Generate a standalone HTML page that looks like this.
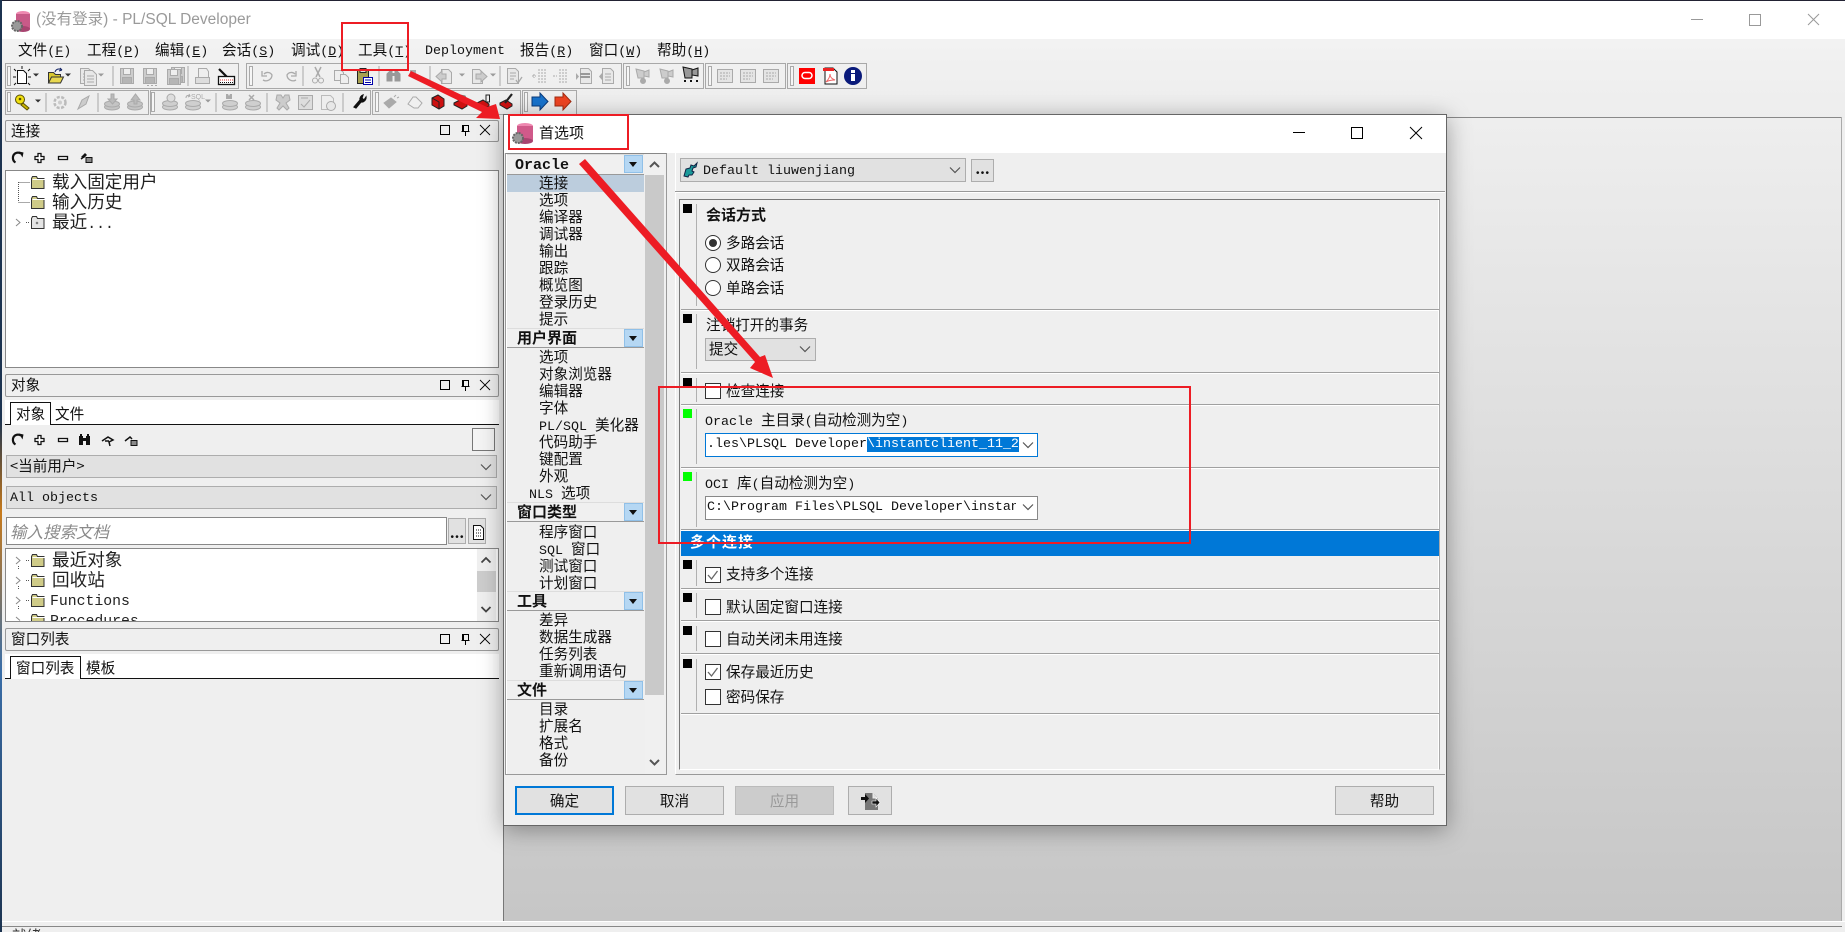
<!DOCTYPE html>
<html lang="zh"><head><meta charset="utf-8"><title>PL/SQL Developer</title>
<style>
html,body{margin:0;padding:0;width:1845px;height:932px;overflow:hidden;background:#efefef}
body{position:relative;font-family:"WenQuanYi Zen Hei","Noto Sans CJK SC",sans-serif;font-size:14.6px;color:#111}
div,svg{position:absolute}
.t{white-space:nowrap;line-height:18px;height:18px}
i.m,.m{font-family:"Liberation Mono",monospace;font-size:13.33px;font-style:normal}
u{text-decoration:underline}
.hd{background:#efefef;border:1px solid #999;box-sizing:border-box;border-radius:2px}
.cb{background:#e1e1e1;border:1px solid #adadad;box-sizing:border-box}
.btn{background:#e1e1e1;border:1px solid #adadad;box-sizing:border-box;text-align:center;line-height:27px}
.w{background:#fff;box-sizing:border-box}
.big{font-size:17.6px;color:#222}
.b{font-weight:bold}
.gl{left:681px;width:758px;height:1px;background:#a0a0a0;box-shadow:0 1px 0 #fff}
.vl{left:696px;width:1px;background:#b0b0b0}
.sq{left:683px;width:9px;height:9px;background:#000}
.ck{left:705px;width:16px;height:16px;background:#fff;border:1px solid #333;box-sizing:border-box}
.nh{left:507px;width:137px;height:20px;background:#f0f0f0;border-bottom:1px solid #999;border-top:1px solid #ddd;box-sizing:border-box}
.nb{left:624px;width:19px;height:18px;background:#b5d7f3;border:1px solid #90c0e8;box-sizing:border-box}
.nb:after{content:"";position:absolute;left:4px;top:6px;border:4px solid transparent;border-top:5px solid #111;border-bottom:0}
</style></head><body>
<!-- title bar -->
<div style="left:0;top:0;width:1845px;height:39px;background:#fff"></div>
<div style="left:0;top:0;width:1845px;height:1px;background:#223"></div>
<div class="t" style="left:36px;top:10px;font-size:15.5px;color:#9a9a9a;font-family:'Liberation Sans','WenQuanYi Zen Hei',sans-serif;line-height:20px;height:20px">(没有登录) - PL/SQL Developer</div>
<svg style="left:1680px;top:8px" width="150" height="24" fill="none" stroke="#999"><path d="M11 11.5h12"/><rect x="69.5" y="6.5" width="11" height="11"/><path d="M128 6l11 11M139 6l-11 11"/></svg>
<!-- menu + toolbar bg -->
<div style="left:0;top:39px;width:1845px;height:79px;background:linear-gradient(#f2f2f2,#ededed)"></div>
<div style="left:504px;top:117px;width:1337px;height:804px;background:linear-gradient(#eeeeee,#c6c6c6);border-top:1px solid #888;box-sizing:border-box"></div>
<div style="left:503px;top:117px;width:1px;height:805px;background:#777"></div>
<div style="left:1841px;top:117px;width:1px;height:805px;background:#aaa"></div>
<div style="left:0;top:921px;width:1845px;height:1px;background:#fff"></div>
<div style="left:0;top:922px;width:1845px;height:10px;background:#efefef"></div>
<div style="left:0;top:926px;width:1842px;height:1px;background:#888"></div>
<div class="t" style="left:12px;top:927px;color:#333">就绪</div>
<div style="left:0;top:0;width:2px;height:932px;background:linear-gradient(#1c3350,#1c3350 45%,#c77a1c 55%,#3a6ea8 72%,#1c3350)"></div>
<!-- menu -->
<div class="t" style="left:18px;top:41px">文件<i class="m">(<u>F</u>)</i></div>
<div class="t" style="left:87px;top:41px">工程<i class="m">(<u>P</u>)</i></div>
<div class="t" style="left:155px;top:41px">编辑<i class="m">(<u>E</u>)</i></div>
<div class="t" style="left:222px;top:41px">会话<i class="m">(<u>S</u>)</i></div>
<div class="t" style="left:291px;top:41px">调试<i class="m">(<u>D</u>)</i></div>
<div class="t" style="left:358px;top:41px">工具<i class="m">(<u>T</u>)</i></div>
<div class="t m" style="left:425px;top:43px">Deployment</div>
<div class="t" style="left:520px;top:41px">报告<i class="m">(<u>R</u>)</i></div>
<div class="t" style="left:589px;top:41px">窗口<i class="m">(<u>W</u>)</i></div>
<div class="t" style="left:657px;top:41px">帮助<i class="m">(<u>H</u>)</i></div>

<!-- toolbars & window icons -->
<svg style="left:0;top:0" width="1845" height="932">
<defs>
<g id="gdoc" fill="#e8e8e8" stroke="#aaa"><path d="M3.5 1.5h8l4 4v11h-12z"/><path d="M6 7h7M6 10h7M6 13h7" fill="none"/></g>
<g id="gflop" fill="#ccc" stroke="#aaa"><rect x="2.5" y="1.5" width="13" height="15"/><rect x="5.5" y="1.5" width="7" height="6" fill="#eee"/><rect x="4.5" y="10.5" width="9" height="6" fill="#b5b5b5"/></g>
<g id="gtray" fill="#c4c4c4" stroke="#aaa"><ellipse cx="9" cy="14" rx="7.5" ry="3"/><ellipse cx="9" cy="11" rx="7.5" ry="3"/></g>
<g id="gdb" fill="#cfcfcf" stroke="#aaa"><ellipse cx="9" cy="14" rx="7.500" ry="3"/><ellipse cx="9" cy="10.500" rx="7.500" ry="3"/></g>
<g id="cam" fill="#ccc" stroke="#aaa"><path d="M2 3l8 2v7H4zM10 6l5-2v7l-5-1z"/><circle cx="9" cy="15" r="2.5" fill="#aaa"/></g>
<g id="glist" fill="#e4e4e4" stroke="#aaa"><rect x="1.5" y="2.5" width="15" height="13"/><path d="M4 6h10M4 9h10M4 12h7" fill="none" stroke-dasharray="2 1"/></g>
<path id="chev" d="M-5-2.5L0 2.5 5-2.5" fill="none" stroke="#555" stroke-width="1.2"/>
<path id="drop" d="M-3-1.5h6L0 1.5z" fill="#333"/>
<g id="grip"><rect x="0.5" y="0.5" width="3" height="19" fill="#f6f6f6" stroke="#aaa"/></g>
<g id="fold"><path d="M1.5 4.5l1-2h4l1 2h6.500v10H1.500z" fill="#cfcb88" stroke="#333"/><path d="M2.500 5.500h12" stroke="#fff"/></g>
<g id="phd" fill="none" stroke="#000"><rect x="0.5" y="0.5" width="9" height="9"/><path d="M22.500 .5h6v6h-6zM23.500 6.500v-6M25.500 7v4M21.500 6.500h8"/><path d="M40 0l10 10M50 0l-10 10" stroke-width=".9"/></g>
<g id="ptool"><path d="M15.500 4.500a5.500 5.500 0 0 1-.5-9 6 6 0 0 1 6 0" fill="none" stroke="#111" stroke-width="2.200"/><path d="M19-6.500l4.500 1-1 5z" fill="#111"/><path d="M38-4.500h3v3h3v3h-3v3h-3v-3h-3v-3h3z" fill="#fff" stroke="#111" stroke-width="1.300"/><rect x="58.500" y="-1.500" width="9" height="3" fill="#fff" stroke="#111" stroke-width="1.300"/></g>
</defs>
<g fill="none" stroke="#a8a8a8">
<rect x="5.5" y="63.5" width="233" height="25"/><rect x="246.5" y="63.5" width="375" height="25"/><rect x="623.5" y="63.5" width="80" height="25"/><rect x="705.5" y="63.5" width="80" height="25"/><rect x="787.5" y="63.5" width="79" height="25"/>
<rect x="5.5" y="90.5" width="143" height="24"/><rect x="150.5" y="90.5" width="220" height="24"/><rect x="372.5" y="90.5" width="148" height="24"/><rect x="522.5" y="90.5" width="54" height="24"/>
<path d="M113 66v20M188 66v20M303 66v20M379 66v20M430 66v20M500 66v20M46 93v19M98 93v19M216 93v19M267 93v19M343 93v19"/>
</g>
<use href="#grip" x="7" y="66"/><use href="#grip" x="249" y="66"/><use href="#grip" x="626" y="66"/><use href="#grip" x="708" y="66"/><use href="#grip" x="790" y="66"/>
<use href="#grip" x="7" y="92"/><use href="#grip" x="151" y="92"/><use href="#grip" x="375" y="92"/><use href="#grip" x="524" y="92"/>
<!-- row1 -->
<path d="M17.500 70.500h6l3 3v10h-9z" fill="#fff" stroke="#111"/><path d="M14 69l2 2M22 66v3M30 69l-2 2M13 77h3M28 77h3M14 85l2-2M30 85l-2-2" stroke="#111"/>
<use href="#drop" x="36" y="75"/>
<path d="M48.500 72.500h5l2 2h5v8h-12z" fill="#d8c830" stroke="#333"/><path d="M48.500 83l3-6h12l-3 6z" fill="#e8d850" stroke="#333"/><path d="M55 72c1-3 4-4 7-2l-2-2M62 70l-3 1" fill="none" stroke="#126"/><use href="#drop" x="68" y="75"/>
<use href="#gdoc" x="77" y="67"/><use href="#gdoc" x="81" y="69"/><use href="#drop" x="101" y="75" opacity=".45"/>
<use href="#gflop" x="118" y="67"/><use href="#gflop" x="141" y="67"/><path d="M147 85.500h2M151 85.500h2M155 85.500h2" stroke="#aaa"/><use href="#gflop" x="169" y="66"/><use href="#gflop" x="165" y="68"/>
<path d="M198.500 68.500h8l2 3v6h-10z" fill="#eee" stroke="#aaa"/><rect x="195.500" y="77.500" width="14" height="6" fill="#ddd" stroke="#aaa"/>
<path d="M219 69l8 8" stroke="#111" stroke-width="2.200"/><rect x="218.500" y="76.500" width="16" height="8" fill="#fff" stroke="#111" stroke-width="1.300"/><path d="M220 80h13" stroke="#d33" stroke-dasharray="1 1"/><path d="M220 82.500h13" stroke="#111" stroke-dasharray="1 1"/>
<path d="M263 80a6 6 0 0 0 9-5 5 5 0 0 0-8-1M262 71v5h5M296 80a6 6 0 0 1-9-5 5 5 0 0 1 8-1M296 71v5h-5" fill="none" stroke="#aaa" stroke-width="1.300"/>
<path d="M315 67l5 10M321 67l-5 10" stroke="#aaa" stroke-width="1.500"/><circle cx="315" cy="80.500" r="2.500" fill="none" stroke="#aaa"/><circle cx="321" cy="80.500" r="2.500" fill="none" stroke="#aaa"/>
<path d="M334.500 70.500h7l2 2v8h-9z" fill="#eee" stroke="#aaa"/><path d="M340.500 74.500h5l3 3v6h-8z" fill="#eee" stroke="#aaa"/>
<rect x="357.500" y="70.500" width="11" height="13" fill="#a8a050" stroke="#222"/><rect x="360" y="68.500" width="6" height="4" fill="#ddd" stroke="#222"/><rect x="363.500" y="77.500" width="9" height="7" fill="#fff" stroke="#00a"/><path d="M365 80h6M365 82.500h6" stroke="#00a"/>
<path d="M387 81v-7l3-3h2v10zM395 81v-10h2l3 3v7z" fill="#999" stroke="#999"/><rect x="391" y="73" width="5" height="3" fill="#999"/><path d="M410 70h6v6h-6z" fill="#aaa"/>
<path d="M441.500 69.500h7l3 3v11h-10z" fill="#e8e8e8" stroke="#aaa"/><path d="M446 74h-4v-3l-6 5.500 6 5.500v-3h4z" fill="#ccc" stroke="#aaa"/><use href="#drop" x="462" y="75" opacity=".45"/>
<path d="M472.500 69.500h7l3 3v11h-10z" fill="#e8e8e8" stroke="#aaa"/><path d="M476 74h5v-3l6 5.500-6 5.500v-3h-5z" fill="#ccc" stroke="#aaa"/><use href="#drop" x="493" y="75" opacity=".45"/>
<path d="M507.500 68.500h8l3 3v12h-11z" fill="#e8e8e8" stroke="#aaa"/><path d="M510 73h6M510 76h6M510 79h4" stroke="#aaa"/><path d="M516 80l2 3 4-6" fill="none" stroke="#aaa" stroke-width="1.300"/>
<path d="M538 70h8M538 73h8M538 76h8M538 79h8M538 82h8M532 76h4M534 74v4M559 70h9M559 73h9M559 76h9M559 79h9M559 82h9M553 76h4" stroke="#aaa" stroke-dasharray="2 1" fill="none"/>
<path d="M580.500 68.500h8l3 3v12h-11z" fill="#e8e8e8" stroke="#aaa"/><path d="M580 74h10M580 77h10" stroke="#999" stroke-width="2"/><path d="M576 73v7l3-3.500z" fill="#aaa"/>
<path d="M602.500 68.500h8l3 3v12h-11z" fill="#e8e8e8" stroke="#aaa"/><path d="M605 74h6M605 77h6M605 80h6" stroke="#aaa"/><path d="M602 73v7l-3-3.500z" fill="#aaa"/>
<use href="#cam" x="634" y="66"/><use href="#cam" x="658" y="66"/><path d="M683 67l9 2v9h-7zM692 70l6-2v8l-6-1z" fill="#999" stroke="#111"/><path d="M684 81h2M690 81h2M696 81h2" stroke="#111" stroke-width="2"/>
<use href="#glist" x="716" y="67"/><use href="#glist" x="739" y="67"/><use href="#glist" x="762" y="67"/>
<rect x="799" y="68" width="16" height="16" fill="#f00"/><rect x="802" y="72.500" width="10" height="6" rx="3" fill="none" stroke="#fff" stroke-width="1.5"/>
<path d="M825 68h8l4 4v12H825z" fill="#fff" stroke="#111"/><path d="M823 68h11v3H823z" fill="#e22"/><path d="M826 82c3-3 4-6 4-8 0 3 2 5 5 6-3 0-6 0-9 2z" fill="none" stroke="#e66"/>
<circle cx="853" cy="76" r="9" fill="#0a1a7a"/><rect x="851" y="74" width="4" height="7" fill="#fff"/><rect x="851" y="70" width="4" height="3" fill="#fff"/>
<!-- row2 -->
<circle cx="20" cy="99.500" r="4.500" fill="#f0e010" stroke="#5a5000"/><circle cx="20" cy="99" r="1.300" fill="#5a5000"/><path d="M23 103l6 5-2 2-6-5z" fill="#c8b400" stroke="#5a5000"/><use href="#drop" x="38" y="101"/>
<circle cx="60" cy="102.500" r="5.500" fill="#eee" stroke="#bbb" stroke-dasharray="3 1.500" stroke-width="2.500"/><circle cx="60" cy="102.500" r="2" fill="#ccc"/><path d="M78 109l4-9 7-4-3 8z" fill="#ccc" stroke="#aaa"/>
<use href="#gtray" x="103" y="93"/><path d="M108 99h3v-5h3v5h3l-4.500 5z" fill="#bbb" stroke="#aaa"/><use href="#gtray" x="126" y="93"/><path d="M131 100h3v4h3v-4h3l-4.500-6z" fill="#bbb" stroke="#aaa"/>
<use href="#gdb" x="161" y="93"/><circle cx="171" cy="98" r="4" fill="#ddd" stroke="#aaa"/><use href="#gdb" x="184" y="93"/><path d="M186 98c0-3 3-3 4-2M189 94l1 2-2 1" fill="none" stroke="#aaa"/><text x="191" y="99" font-family="Liberation Sans" font-size="7" fill="#aaa">SQL</text><use href="#drop" x="208" y="101" opacity=".45"/>
<use href="#gdb" x="221" y="93"/><path d="M226 99v-5h2l1 2 1-2h2v5z" fill="#aaa"/><use href="#gdb" x="244" y="93"/><path d="M249 95l5 5M254 95l-5 5" stroke="#aaa" stroke-width="1.500"/>
<path d="M277 95h4l2 3 2-3h4l1 5-4 3 3 5-2 2-4-4-4 4-2-2 3-5-4-3z" fill="#ccc" stroke="#aaa"/><rect x="298.500" y="95.500" width="14" height="14" fill="#ddd" stroke="#aaa"/><path d="M301 98h7M301 104l3 3 6-7" fill="none" stroke="#aaa"/><path d="M321.500 95.500h9l3 3v11h-12z" fill="#eee" stroke="#bbb"/><circle cx="331" cy="106" r="4.500" fill="#e8e8e8" stroke="#aaa"/>
<path d="M354 107l6-7a4.500 4.500 0 0 1 3-5l-1 3 2 2 2-3a4.500 4.500 0 0 1-5 5l-5 6z" fill="#111" stroke="#111" stroke-width="1.200"/>
<path d="M384 103l7-5 5 4-7 6zM394 97l2-2M397 98l2-1" fill="#aaa" stroke="#aaa"/><path d="M408 104l5-7h3l6 6-4 5h-4z" fill="#f0f0f0" stroke="#aaa"/>
<path d="M432 98l6-3 6 4v7l-5 3-7-4z" fill="#cc1111" stroke="#222"/><path d="M432 98l7 4v7" stroke="#222" fill="none"/>
<path d="M454 103l6-3 7 4v2l-5 3-8-4z" fill="#cc1111" stroke="#222"/><path d="M460 95l5 1 2 4-5 1z" fill="#eedd22" stroke="#777"/>
<path d="M477 103l6-3 6 4v2l-5 3-7-4z" fill="#cc1111" stroke="#222"/><rect x="486" y="95" width="3.500" height="7" fill="#eee" stroke="#222"/>
<path d="M500 103l6-3 6 4v2l-5 3-7-4z" fill="#cc1111" stroke="#222"/><path d="M505 103l7-9" stroke="#222" stroke-width="2.200"/>
<path d="M532 97h8v-4l8 8.500-8 8.500v-4h-8z" fill="#1873cc" stroke="#0a3a7a"/><path d="M555 97h8v-4l8 8.500-8 8.500v-4h-8z" fill="#ee4422" stroke="#a02a10"/>
<!-- left panel toolbars -->
<use href="#ptool" x="0" y="158"/>
<use href="#ptool" x="0" y="440"/>
<path d="M81 157l4-4 2 2-3 3z" fill="#111"/><path d="M81 159l4-3" stroke="#111" stroke-width="1.500"/><rect x="86" y="157.500" width="6" height="5" fill="#888" stroke="#111"/>
<rect x="79" y="436" width="4" height="9" fill="#111"/><rect x="86" y="436" width="4" height="9" fill="#111"/><rect x="81" y="438" width="7" height="3" fill="#111"/><path d="M80 435h2M87 435h2" stroke="#111" stroke-width="2"/>
<path d="M102 441l6-4 5 3-4 2 1 4M105 441l4 0" stroke="#111" stroke-width="1.500" fill="none"/><path d="M125 441l5-4 2 2" stroke="#111" stroke-width="1.500" fill="none"/><rect x="131" y="440.500" width="6" height="5" fill="#888" stroke="#111"/>
</svg>

<!-- left panels -->
<div class="hd" style="left:5px;top:120px;width:494px;height:22px"></div>
<div class="t" style="left:11px;top:122px">连接</div>
<div class="w" style="left:5px;top:170px;width:494px;height:198px;border:1px solid #888"></div>
<div class="t big" style="left:52px;top:173px">载入固定用户</div>
<div class="t big" style="left:52px;top:193px">输入历史</div>
<div class="t big" style="left:52px;top:213px">最近<span class="m" style="font-size:14.8px">...</span></div>

<div class="hd" style="left:5px;top:374px;width:494px;height:23px"></div>
<div class="t" style="left:11px;top:376px">对象</div>
<div style="left:5px;top:400px;width:494px;height:24px;background:#fff;border-bottom:1px solid #111"></div>
<div style="left:10px;top:402px;width:41px;height:23px;background:#fff;border:1px solid #111;border-bottom:0;box-sizing:border-box"></div>
<div class="t" style="left:16px;top:405px">对象</div><div class="t" style="left:55px;top:405px">文件</div>
<div class="w" style="left:472px;top:428px;width:23px;height:23px;background:#f4f4f4;border:1px solid #777"></div>
<div class="cb" style="left:6px;top:455px;width:491px;height:23px"></div>
<div class="t" style="left:10px;top:457px">&lt;当前用户&gt;</div>
<div class="cb" style="left:6px;top:486px;width:491px;height:23px"></div>
<div class="t m" style="left:10px;top:490px">All objects</div>
<div class="w" style="left:6px;top:517px;width:441px;height:28px;border:1px solid #888"></div>
<div class="t" style="left:10px;top:522px;font-style:italic;font-size:16.5px;color:#8a8a8a">输入搜索文档</div>
<div class="btn" style="left:448px;top:518px;width:18px;height:26px;font-weight:bold">...</div>
<div class="btn" style="left:468px;top:518px;width:18px;height:26px"></div>
<div class="w" style="left:5px;top:548px;width:494px;height:74px;border:1px solid #888;overflow:hidden">
  <div class="t big" style="left:46px;top:2px">最近对象</div>
  <div class="t big" style="left:46px;top:22px">回收站</div>
  <div class="t m" style="left:44px;top:44px;font-size:14.8px;color:#222">Functions</div>
  <div class="t m" style="left:44px;top:64px;font-size:14.8px;color:#222">Procedures</div>
  <div style="left:471px;top:0;width:19px;height:72px;background:#f0f0f0"></div>
  <div style="left:471px;top:22px;width:19px;height:21px;background:#cdcdcd"></div>
</div>
<div class="hd" style="left:5px;top:628px;width:494px;height:23px"></div>
<div class="t" style="left:11px;top:630px">窗口列表</div>
<div style="left:5px;top:654px;width:494px;height:24px;background:#fff;border-bottom:1px solid #111"></div>
<div style="left:10px;top:656px;width:71px;height:23px;background:#fff;border:1px solid #111;border-bottom:0;box-sizing:border-box"></div>
<div class="t" style="left:16px;top:659px">窗口列表</div><div class="t" style="left:86px;top:659px">模板</div>

<svg style="left:0;top:0" width="510" height="690">
<use href="#phd" x="440" y="125"/><use href="#phd" x="440" y="380"/><use href="#phd" x="440" y="634"/>
<path d="M18.500 182v20M18.500 182.500h12M18.500 202.500h12M26 222.500h4" stroke="#555" stroke-dasharray="1 1" fill="none"/>
<use href="#fold" x="30" y="174"/><use href="#fold" x="30" y="194"/>
<path d="M31.500 218.500l1-2h4l1 2h6.500v10H31.500z" fill="#e4e4e4" stroke="#333"/><path d="M36 222l2 2M38 222l-2 2" stroke="#777"/>
<path d="M16 219l4 3.500-4 3.500" fill="none" stroke="#888"/>
<use href="#chev" x="486" y="467"/><use href="#chev" x="486" y="497"/>
<path d="M16 557l4 3.500-4 3.500M16 577l4 3.500-4 3.500M16 597l4 3.500-4 3.500M16 617l4 3.500" fill="none" stroke="#888"/>
<path d="M18.500 566v3M18.500 586v3M18.500 606v3M26 560.500h3M26 580.500h3M26 600.500h3" stroke="#555" stroke-dasharray="1 1"/>
<use href="#fold" x="30" y="552"/><use href="#fold" x="30" y="572"/><use href="#fold" x="30" y="592"/>
<svg x="0" y="548" width="510" height="73" style="position:static"><use href="#fold" x="30" y="64"/></svg>
<path d="M481.500 562.500l4.500-4.500 4.500 4.500M481.500 607l4.500 4.500 4.500-4.500" fill="none" stroke="#444" stroke-width="1.800"/>
<path d="M473.500 525.500h7l3 3v11h-10z" fill="#fff" stroke="#111"/><path d="M476 530h5M476 533h5M476 536h5" stroke="#111" stroke-dasharray="1 1"/>
</svg>

<!-- dialog -->
<div style="left:503px;top:114px;width:944px;height:712px;background:#efefef;border:1px solid #666;box-sizing:border-box;box-shadow:0 4px 22px rgba(0,0,0,.35)"></div>
<div style="left:504px;top:115px;width:942px;height:38px;background:#fff"></div>
<div class="t" style="left:539px;top:124px;font-size:15px">首选项</div>
<svg style="left:1280px;top:120px" width="160" height="26" fill="none" stroke="#000"><path d="M13 12.500h12"/><rect x="71.500" y="7.500" width="11" height="11"/><path d="M130 7l12 12M142 7l-12 12"/></svg>
<svg style="left:510px;top:121px" width="26" height="26"><ellipse cx="15" cy="5" rx="8" ry="3" fill="#ee88b0"/><rect x="7" y="5" width="16" height="15" fill="#d05a8a"/><ellipse cx="15" cy="20" rx="8" ry="3" fill="#a84470"/><circle cx="8" cy="17" r="5" fill="#999" stroke="#666" stroke-width="2" stroke-dasharray="2 1"/></svg>
<svg style="left:9px;top:9px" width="26" height="26"><ellipse cx="14" cy="5" rx="7" ry="3" fill="#ee88b0"/><rect x="7" y="5" width="14" height="15" fill="#c85a88"/><ellipse cx="14" cy="20" rx="7" ry="3" fill="#a84470"/><circle cx="8" cy="17" r="5" fill="#999" stroke="#666" stroke-width="2" stroke-dasharray="2 1"/></svg>

<!-- nav -->
<div style="left:505px;top:153px;width:162px;height:622px;border:1px solid #999;border-top:1px solid #888;box-sizing:border-box;box-shadow:inset 1px 0 0 #fff"></div>
<div style="left:645px;top:154px;width:20px;height:620px;background:#f0f0f0"></div>
<div style="left:645px;top:175px;width:19px;height:520px;background:#c9c9c9"></div>
<div style="left:507px;top:175px;width:137px;height:17px;background:#bccddd"></div>

<div class="nh" style="top:154px;height:21px"></div><div class="nb" style="top:155px"></div>
<div class="t m b" style="left:515px;top:157px;font-size:15px">Oracle</div>
<div class="t" style="left:539px;top:174px">连接</div><div class="t" style="left:539px;top:191px">选项</div><div class="t" style="left:539px;top:208px">编译器</div><div class="t" style="left:539px;top:225px">调试器</div><div class="t" style="left:539px;top:242px">输出</div><div class="t" style="left:539px;top:259px">跟踪</div><div class="t" style="left:539px;top:276px">概览图</div><div class="t" style="left:539px;top:293px">登录历史</div><div class="t" style="left:539px;top:310px">提示</div>
<div class="nh" style="top:328px"></div><div class="nb" style="top:329px"></div>
<div class="t b" style="left:517px;top:329px;font-size:15px">用户界面</div>
<div class="t" style="left:539px;top:348px">选项</div><div class="t" style="left:539px;top:365px">对象浏览器</div><div class="t" style="left:539px;top:382px">编辑器</div><div class="t" style="left:539px;top:399px">字体</div><div class="t" style="left:539px;top:416px"><i class="m">PL/SQL </i>美化器</div><div class="t" style="left:539px;top:433px">代码助手</div><div class="t" style="left:539px;top:450px">键配置</div><div class="t" style="left:539px;top:467px">外观</div><div class="t" style="left:529px;top:484px"><i class="m">NLS </i>选项</div>
<div class="nh" style="top:502px"></div><div class="nb" style="top:503px"></div>
<div class="t b" style="left:517px;top:503px;font-size:15px">窗口类型</div>
<div class="t" style="left:539px;top:523px">程序窗口</div><div class="t" style="left:539px;top:540px"><i class="m">SQL </i>窗口</div><div class="t" style="left:539px;top:557px">测试窗口</div><div class="t" style="left:539px;top:574px">计划窗口</div>
<div class="nh" style="top:591px"></div><div class="nb" style="top:592px"></div>
<div class="t b" style="left:517px;top:592px;font-size:15px">工具</div>
<div class="t" style="left:539px;top:611px">差异</div><div class="t" style="left:539px;top:628px">数据生成器</div><div class="t" style="left:539px;top:645px">任务列表</div><div class="t" style="left:539px;top:662px">重新调用语句</div>
<div class="nh" style="top:680px"></div><div class="nb" style="top:681px"></div>
<div class="t b" style="left:517px;top:681px;font-size:15px">文件</div>
<div class="t" style="left:539px;top:700px">目录</div><div class="t" style="left:539px;top:717px">扩展名</div><div class="t" style="left:539px;top:734px">格式</div><div class="t" style="left:539px;top:751px">备份</div>

<!-- right pane -->
<div style="left:675px;top:153px;width:770px;height:622px;border-bottom:1px solid #999;border-left:1px solid #fff;box-sizing:border-box"></div>
<div style="left:675px;top:191px;width:770px;height:1px;background:#999;box-shadow:0 1px 0 #fff"></div>
<div class="cb" style="left:680px;top:158px;width:286px;height:24px"></div>
<div class="t m" style="left:703px;top:163px">Default liuwenjiang</div>
<div class="btn" style="left:971px;top:159px;width:23px;height:23px;font-weight:bold;line-height:17px">...</div>
<div style="left:679px;top:199px;width:761px;height:571px;border:1px solid #777;border-right:1px solid #aaa;border-bottom:1px solid #fff;box-sizing:border-box;box-shadow:inset -1px 0 0 #fff"></div>

<div class="gl" style="top:309px"></div><div class="gl" style="top:372px"></div><div class="gl" style="top:404px"></div><div class="gl" style="top:467px"></div><div class="gl" style="top:529px"></div><div class="gl" style="top:588px"></div><div class="gl" style="top:620px"></div><div class="gl" style="top:653px"></div><div class="gl" style="top:713px"></div>
<div class="vl" style="top:204px;height:102px"></div><div class="vl" style="top:314px;height:55px"></div><div class="vl" style="top:378px;height:24px"></div><div class="vl" style="top:409px;height:55px"></div><div class="vl" style="top:472px;height:55px"></div><div class="vl" style="top:560px;height:26px"></div><div class="vl" style="top:593px;height:25px"></div><div class="vl" style="top:626px;height:25px"></div><div class="vl" style="top:659px;height:52px"></div>
<div class="sq" style="top:204px"></div><div class="sq" style="top:314px"></div><div class="sq" style="top:378px"></div><div class="sq" style="top:409px;background:#0f0"></div><div class="sq" style="top:472px;background:#0f0"></div><div class="sq" style="top:560px"></div><div class="sq" style="top:593px"></div><div class="sq" style="top:626px"></div><div class="sq" style="top:659px"></div>

<div class="t b" style="left:706px;top:206px;font-size:15px">会话方式</div>
<div class="t" style="left:726px;top:234px">多路会话</div><div class="t" style="left:726px;top:256px">双路会话</div><div class="t" style="left:726px;top:279px">单路会话</div>
<div class="t" style="left:706px;top:316px">注销打开的事务</div>
<div class="cb" style="left:705px;top:338px;width:111px;height:23px"></div>
<div class="t" style="left:709px;top:340px">提交</div>
<div class="ck" style="top:383px"></div><div class="t" style="left:726px;top:382px">检查连接</div>
<div class="t" style="left:705px;top:411px"><i class="m">Oracle </i>主目录<i class="m">(</i>自动检测为空<i class="m">)</i></div>
<div class="w" style="left:705px;top:433px;width:333px;height:24px;border:1px solid #0078d7;overflow:hidden"><div class="t m" style="left:1px;top:2px">.les\PLSQL Developer<span style="background:#0078d7;color:#fff">\instantclient_11_2</span></div></div>
<div class="t" style="left:705px;top:474px"><i class="m">OCI </i>库<i class="m">(</i>自动检测为空<i class="m">)</i></div>
<div class="w" style="left:705px;top:496px;width:333px;height:24px;border:1px solid #888;overflow:hidden"><div style="left:0;top:0;width:310px;height:22px;overflow:hidden"><div class="t m" style="left:1px;top:2px">C:\Program Files\PLSQL Developer\instan</div></div></div>
<div style="left:681px;top:531px;width:758px;height:25px;background:#0078d7"></div>
<div class="t b" style="left:690px;top:533px;color:#fff;font-size:15px;letter-spacing:1px">多个连接</div>
<div class="ck" style="top:567px"></div><div class="t" style="left:726px;top:565px">支持多个连接</div>
<div class="ck" style="top:599px"></div><div class="t" style="left:726px;top:598px">默认固定窗口连接</div>
<div class="ck" style="top:631px"></div><div class="t" style="left:726px;top:630px">自动关闭未用连接</div>
<div class="ck" style="top:664px"></div><div class="t" style="left:726px;top:663px">保存最近历史</div>
<div class="ck" style="top:689px"></div><div class="t" style="left:726px;top:688px">密码保存</div>

<div class="btn" style="left:515px;top:786px;width:99px;height:29px;border:2px solid #0078d7;line-height:25px">确定</div>
<div class="btn" style="left:625px;top:786px;width:99px;height:29px">取消</div>
<div class="btn" style="left:735px;top:786px;width:99px;height:29px;background:#ccc;border-color:#bbb;color:#999">应用</div>
<div class="btn" style="left:848px;top:786px;width:44px;height:29px"></div>
<div class="btn" style="left:1335px;top:786px;width:99px;height:29px">帮助</div>

<svg style="left:0;top:0" width="1845" height="932">
<use href="#chev" x="955" y="170"/><use href="#chev" x="805" y="349"/><use href="#chev" x="1028" y="445"/><use href="#chev" x="1028" y="507"/>
<path d="M650 167l4.500-4.500 4.500 4.500M650 760l4.500 4.500 4.500-4.500" fill="none" stroke="#555" stroke-width="2"/>
<path d="M684 176l2-7 4-1 1-3 3 1 3-3-1 4-3 1-1 3 2 1-2 3-3 0-1 2z" fill="#1a9a9a" stroke="#124"/>
<circle cx="713" cy="243" r="7.500" fill="#fff" stroke="#333"/><circle cx="713" cy="243" r="4" fill="#333"/>
<circle cx="713" cy="265" r="7.500" fill="#fff" stroke="#333"/><circle cx="713" cy="288" r="7.500" fill="#fff" stroke="#333"/>
<path d="M708 575l3.500 4 6-8M708 672l3.500 4 6-8" fill="none" stroke="#666" stroke-width="1.300"/>
<path d="M865 793h8l5 5v12h-13z" fill="#777"/><path d="M873 793v5h5" fill="#ddd" stroke="#eee"/>
<path d="M861 797h4v-3l4 4.500-4 4.500v-3h-4z" fill="#111"/><path d="M872 801h4v-3l4 4.500-4 4.500v-3h-4z" fill="#111" stroke="#fff" stroke-width=".6"/>
<!-- red annotations -->
<g fill="none" stroke="#ed1c24" stroke-width="2"><rect x="342" y="23" width="66" height="47"/><rect x="509" y="115" width="119" height="34"/><rect x="659" y="387" width="531" height="156"/></g>
<g fill="#ed1c24"><path d="M411 71L487 107 496 104 500 119 476 118 482 112 408 76z"/><path d="M585 159L760 357 765 355 773 378 750 368 755 362 579 164z"/></g>
</svg>
</body></html>
